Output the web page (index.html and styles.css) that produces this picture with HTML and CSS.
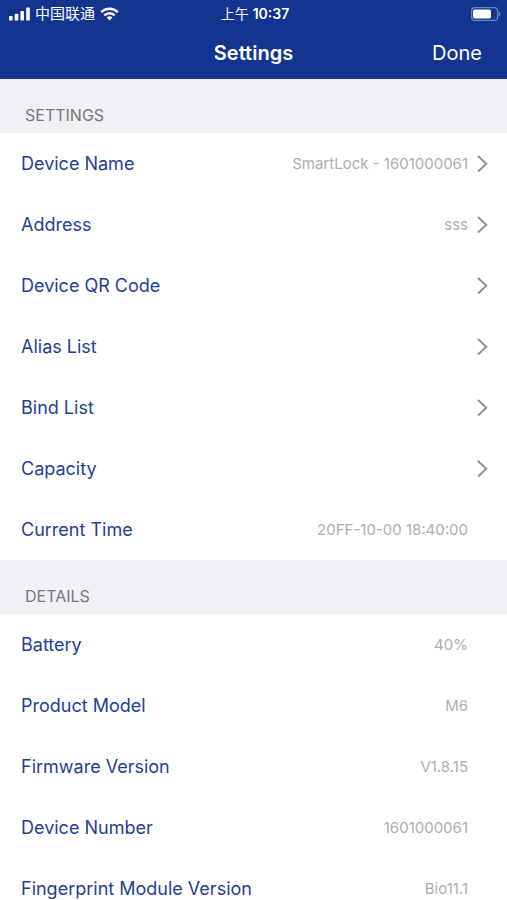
FILE: index.html
```html
<!DOCTYPE html>
<html lang="en">
<head>
<meta charset="utf-8">
<meta name="viewport" content="width=device-width, initial-scale=1">
<title>Settings</title>
<link rel="stylesheet" href="styles.css">
</head>
<body>
<svg class="sprite" aria-hidden="true">
  <symbol id="chevron" viewBox="0 0 12 18"><path d="M2 1 10.300 8.700 2 16.400" fill="none" stroke="currentColor" stroke-width="2"/></symbol>
</svg>
<header class="top">
  <div class="status">
    <div class="carrier">
      <svg width="21" height="14" viewBox="0 0 21 14" fill="currentColor" aria-hidden="true">
        <rect x="0" y="9" width="3.600" height="4.500" rx="1"/><rect x="5.700" y="6.800" width="3.600" height="6.700" rx="1"/><rect x="11.400" y="4" width="3.600" height="9.500" rx="1"/><rect x="17.200" y=".5" width="3.600" height="13" rx="1"/>
      </svg>
      <span lang="zh">中国联通</span>
      <svg width="19" height="14" viewBox="0 0 19 14" aria-hidden="true">
        <path d="M1.200 5.200a11.700 11.700 0 0 1 16.600 0M4.300 8.400a7.300 7.300 0 0 1 10.400 0" fill="none" stroke="currentColor" stroke-width="2.500"/>
        <path d="M9.500 13.500 6.600 10.600a4.200 4.200 0 0 1 5.800 0z" fill="currentColor"/>
      </svg>
    </div>
    <div class="clock"><span lang="zh">上午</span> <b>10:37</b></div>
    <svg class="battery" width="30" height="14" viewBox="0 0 30 14" aria-hidden="true">
      <rect x=".6" y=".6" width="26" height="12.800" rx="3.500" fill="none" stroke="#6f86c4" stroke-width="1.200"/>
      <rect x="2" y="2.500" width="18" height="9" rx="1.800" fill="currentColor"/>
      <path d="M27.600 4.500q2 1 2 2.500t-2 2.500z" fill="#6f86c4"/>
    </svg>
  </div>
  <div class="nav">
    <h1>Settings</h1>
    <button class="done" type="button">Done</button>
  </div>
</header>
<main>
  <section>
    <h2>SETTINGS</h2>
    <button class="row" type="button"><span>Device Name</span><span class="value">SmartLock - 1601000061</span><svg class="chevron" aria-hidden="true"><use href="#chevron"/></svg></button>
    <button class="row" type="button"><span>Address</span><span class="value">sss</span><svg class="chevron" aria-hidden="true"><use href="#chevron"/></svg></button>
    <button class="row" type="button"><span>Device QR Code</span><svg class="chevron" aria-hidden="true"><use href="#chevron"/></svg></button>
    <button class="row" type="button"><span>Alias List</span><svg class="chevron" aria-hidden="true"><use href="#chevron"/></svg></button>
    <button class="row" type="button"><span>Bind List</span><svg class="chevron" aria-hidden="true"><use href="#chevron"/></svg></button>
    <button class="row" type="button"><span>Capacity</span><svg class="chevron" aria-hidden="true"><use href="#chevron"/></svg></button>
    <div class="row static"><span>Current Time</span><span class="value">20FF-10-00 18:40:00</span></div>
  </section>
  <section>
    <h2>DETAILS</h2>
    <div class="row static"><span>Battery</span><span class="value">40%</span></div>
    <div class="row static"><span>Product Model</span><span class="value">M6</span></div>
    <div class="row static"><span>Firmware Version</span><span class="value">V1.8.15</span></div>
    <div class="row static"><span>Device Number</span><span class="value">1601000061</span></div>
    <div class="row static"><span>Fingerprint Module Version</span><span class="value">Bio11.1</span></div>
  </section>
</main>
</body>
</html>
```
FILE: styles.css
```css
* {
  box-sizing: border-box;
}

body {
  margin: 0;
  height: 100vh;
  display: flex;
  flex-direction: column;
  background: #fff;
  font-family: Inter, "Noto Sans CJK SC", sans-serif;
}

button {
  border: 0;
  background: none;
  font: inherit;
  color: inherit;
  cursor: pointer;
}

svg {
  display: block;
  flex: none;
}

.sprite {
  position: absolute;
  width: 0;
  height: 0;
}

.top {
  flex: none;
  background: #13358f;
  color: #fff;
}

.status {
  display: grid;
  grid-template-columns: 1fr auto 1fr;
  align-items: center;
  height: 27px;
  padding: 0 6px 0 9px;
  font-size: 15px;
  line-height: 20px;
}

.carrier {
  display: flex;
  align-items: center;
  gap: 5px;
}

.clock {
  font-size: 14px;
}

.clock b {
  font-weight: 600;
}

.battery {
  justify-self: end;
}

.nav {
  display: grid;
  grid-template-columns: 1fr auto 1fr;
  align-items: center;
  height: 52px;
  padding: 0 25px;
  font-size: 20px;
  line-height: 24px;
}

h1 {
  grid-column: 2;
  margin: 0;
  font-size: 20px;
  font-weight: 600;
}

.done {
  justify-self: end;
  padding: 0;
}

main {
  flex: 1;
  min-height: 0;
  overflow-y: auto;
  scrollbar-width: none;
}

h2 {
  margin: 0;
  padding: 26px 25px 8px;
  background: #f0f0f5;
  color: #77777b;
  font-size: 16px;
  font-weight: 400;
  line-height: 20px;
}

.row {
  display: flex;
  align-items: center;
  justify-content: space-between;
  width: 100%;
  height: 61px;
  padding: 0 19px 0 21px;
  color: #1f3f94;
  font-size: 18px;
  line-height: 24px;
  text-align: left;
}

.static {
  padding-right: 39px;
}

.value {
  margin-left: auto;
  color: #aeaeb0;
  font-size: 15px;
}

.chevron {
  width: 12px;
  height: 18px;
  margin-left: 8px;
  color: #929295;
}
```
